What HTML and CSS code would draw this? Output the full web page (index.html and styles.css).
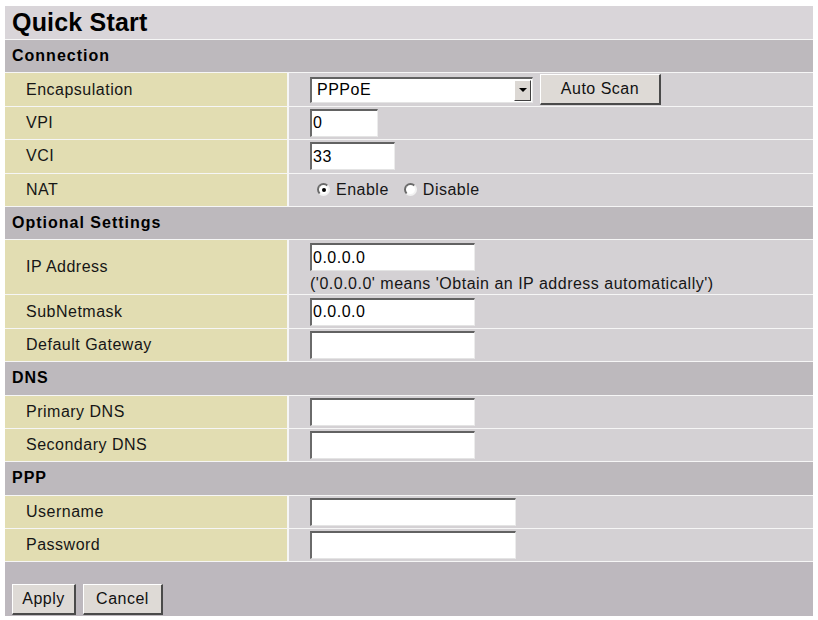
FILE: index.html
```html
<!DOCTYPE html>
<html>
<head>
  <title>Quick Start</title>
  <link rel="stylesheet" href="styles.css">
</head>
<body>

    <form class="quick" id="form">

        <h1 class="title">Quick Start</h1>

        <h2 class="group">Connection</h2>

        <section class="row">
            <label class="name">Encapsulation</label>
            <div class="value">
                <div class="select">
                    <span class="select-text">PPPoE</span>
                    <span class="select-arrow"></span>
                </div>
                <button type="button" class="btn scan">Auto Scan</button>
            </div>
        </section>

        <section class="row">
            <label class="name" for="vpi">VPI</label>
            <div class="value"><input id="vpi" class="field w-vpi" type="text" value="0"></div>
        </section>

        <section class="row">
            <label class="name" for="vci">VCI</label>
            <div class="value"><input id="vci" class="field w-vci" type="text" value="33"></div>
        </section>

        <section class="row">
            <label class="name">NAT</label>
            <div class="value radios">
                <span class="choice"><span class="radio checked"></span>Enable</span>
                <span class="choice"><span class="radio"></span>Disable</span>
            </div>
        </section>

        <h2 class="group">Optional Settings</h2>

        <section class="row tall">
            <label class="name" for="ip">IP Address</label>
            <div class="value stack">
                <input id="ip" class="field w-ip" type="text" value="0.0.0.0">
                <span class="note">('0.0.0.0' means 'Obtain an IP address automatically')</span>
            </div>
        </section>

        <section class="row">
            <label class="name" for="mask">SubNetmask</label>
            <div class="value"><input id="mask" class="field w-ip" type="text" value="0.0.0.0"></div>
        </section>

        <section class="row">
            <label class="name" for="gw">Default Gateway</label>
            <div class="value"><input id="gw" class="field w-ip" type="text"></div>
        </section>

        <h2 class="group">DNS</h2>

        <section class="row">
            <label class="name" for="dns1">Primary DNS</label>
            <div class="value"><input id="dns1" class="field w-ip" type="text"></div>
        </section>

        <section class="row">
            <label class="name" for="dns2">Secondary DNS</label>
            <div class="value"><input id="dns2" class="field w-ip" type="text"></div>
        </section>

        <h2 class="group">PPP</h2>

        <section class="row">
            <label class="name" for="user">Username</label>
            <div class="value"><input id="user" class="field w-user" type="text"></div>
        </section>

        <section class="row">
            <label class="name" for="pass">Password</label>
            <div class="value"><input id="pass" class="field w-user" type="password"></div>
        </section>

        <section class="actions">
            <button type="submit" class="btn apply">Apply</button>
            <button type="button" class="btn cancel">Cancel</button>
        </section>

    </form>

</body>
</html>
```

FILE: styles.css
```css
body{
    margin: 0;
    background: #fff;
    font-family: "Liberation Sans", Arial, sans-serif;
    font-size: 16px;
    letter-spacing: 0.5px;
    color: #161616;
}

.quick{
    display: flex;
    flex-direction: column;
    gap: 1px;
    width: 808px;
    margin: 6px 0 0 5px;
    background: #f6f6f6;
}

.title{
    margin: 0;
    height: 33px;
    display: flex;
    align-items: center;
    padding-left: 7px;
    background: #d9d5d9;
    font-size: 25px;
    font-weight: bold;
    letter-spacing: 0.2px;
    color: #000;
}

.group{
    margin: 0;
    height: 32.4px;
    display: flex;
    align-items: center;
    padding-left: 7px;
    background: #bdb9bd;
    font-size: 16px;
    font-weight: bold;
    letter-spacing: 1px;
    color: #000;
}

.row{
    display: grid;
    grid-template-columns: 282px 1fr;
    column-gap: 2px;
    height: 32.4px;
}

.row.tall{
    height: 54px;
}

.name{
    display: flex;
    align-items: center;
    padding-left: 21px;
    background: #e2ddb2;
}

.value{
    display: flex;
    align-items: center;
    gap: 7px;
    padding-left: 21px;
    background: #d4d1d4;
}

.value.stack{
    flex-direction: column;
    align-items: flex-start;
    justify-content: flex-end;
    gap: 3px;
}

.note{
    line-height: 20px;
}

.field{
    box-sizing: border-box;
    height: 28px;
    padding: 0 0 0 1px;
    font: inherit;
    letter-spacing: inherit;
    color: #000;
    background: #fff;
    border-top: 2px solid #626262;
    border-left: 2px solid #6a6a6a;
    border-right: 1px solid #ececec;
    border-bottom: 1px solid #e4e4e4;
    outline: none;
}

.w-vpi{ width: 68px; }
.w-vci{ width: 85px; }
.w-ip{ width: 165px; }
.w-user{ width: 206px; }

.select{
    box-sizing: border-box;
    display: flex;
    align-items: stretch;
    width: 223px;
    height: 26px;
    background: #fff;
    border-top: 2px solid #626262;
    border-left: 2px solid #6a6a6a;
    border-right: 1px solid #ececec;
    border-bottom: 1px solid #e4e4e4;
}

.select-text{
    flex: 1;
    display: flex;
    align-items: center;
    padding-left: 5px;
    color: #000;
}

.select-arrow{
    box-sizing: border-box;
    width: 17px;
    margin: 1px;
    display: flex;
    align-items: center;
    justify-content: center;
    background: #dcd8d4;
    border-top: 1px solid #fff;
    border-left: 1px solid #fff;
    border-right: 1px solid #404040;
    border-bottom: 1px solid #404040;
}

.select-arrow::after{
    content: "";
    border-left: 4px solid transparent;
    border-right: 4px solid transparent;
    border-top: 4px solid #000;
}

.btn{
    box-sizing: border-box;
    height: 31px;
    padding: 0;
    font: inherit;
    letter-spacing: inherit;
    color: #111;
    background: #dedad6;
    border-top: 1px solid #fff;
    border-left: 1px solid #fff;
    border-right: 2px solid #4a4a4a;
    border-bottom: 2px solid #4a4a4a;
    cursor: pointer;
}

.scan{
    width: 121px;
}

.radios{
    padding-left: 28px;
    gap: 15px;
}

.choice{
    display: flex;
    align-items: center;
    gap: 6px;
}

.radio{
    box-sizing: border-box;
    width: 13px;
    height: 13px;
    border-radius: 50%;
    background: #fff;
    border: 2px solid;
    border-color: #6a6a6a #f2f2f2 #f2f2f2 #6a6a6a;
    display: flex;
    align-items: center;
    justify-content: center;
}

.radio.checked::after{
    content: "";
    width: 4px;
    height: 4px;
    border-radius: 50%;
    background: #000;
}

.actions{
    display: flex;
    align-items: flex-end;
    gap: 7px;
    height: 54px;
    padding: 0 0 1px 7px;
    box-sizing: border-box;
    background: #bdb8be;
}

.apply{
    width: 64px;
}

.cancel{
    width: 80px;
}
```
